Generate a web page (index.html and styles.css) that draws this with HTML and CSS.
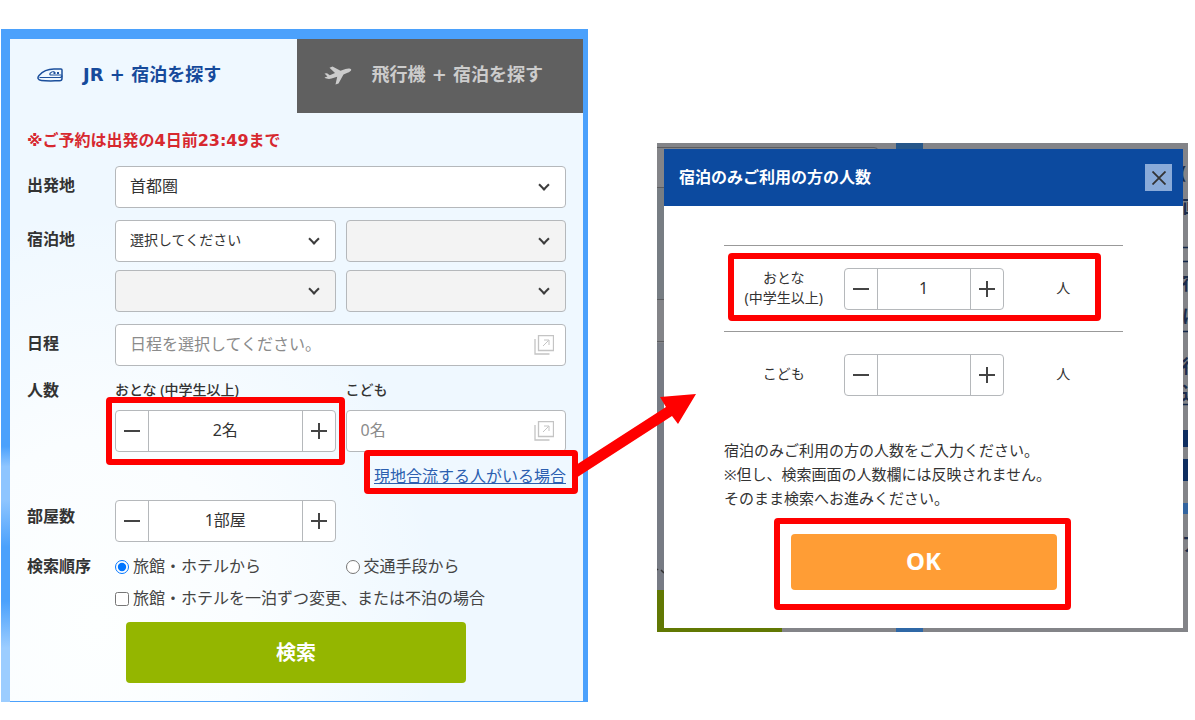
FILE: index.html
```html
<!DOCTYPE html>
<html lang="ja">

<head>
    <meta charset="UTF-8">
    <meta name="viewport" content="width=device-width, initial-scale=1.0">
    <title>JR + 宿泊を探す</title>
    <link rel="stylesheet" href="styles.css">
</head>

<body>
    <div id="container">
        <div class="search-box">
            <div class="search-inner">
                <div class="tab-box">
                    <button type="button" class="tab selected">
                        <svg width="26" height="14" viewBox="0 0 26 14" fill="none" stroke="#1b4f9c" stroke-width="1.500">
                            <path d="M24 1H17C10 1 5 4 2 7.500C0 10 1 12 4.500 12.500C10 13.200 17 12.800 22.500 12.800Q25 12.800 25 10.500V2Q25 1 24 1Z" />
                            <path d="M2.500 9.500H22.500Q25 9.500 25 7.500" stroke-width="1.200" />
                            <path d="M24.500 7H14.500Q12 7 13.200 5.200Q14.500 3.500 17.500 3.500" stroke-width="1.200" />
                            <path d="M16.500 5h2M20 5h2" stroke-width="2" />
                        </svg>
                        <span>JR + 宿泊を探す</span>
                    </button>
                    <button type="button" class="tab">
                        <svg width="28" height="20" viewBox="0 0 28 20" fill="#cccccc">
                            <path d="M0.500 8.500L3 8.300L5.800 10.200L11 8L5.500 2.800L8.500 1.500L16.500 5.700L21.500 4C24 3.200 26.500 3.300 27.200 4.500C27.600 5.800 25.500 7 23.500 7.800L19.500 9.400L14.500 18.500L11.500 19.500L13.200 11.700L7.500 13.600C5 14.300 2.500 14 0.500 12.500L3.500 11.500Z" />
                        </svg>
                        <span>飛行機 + 宿泊を探す</span>
                    </button>
                </div>

                <form class="search-form">
                    <p class="limit">※ご予約は出発の4日前23:49まで</p>

                    <div class="row">
                        <label class="head" for="departure">出発地</label>
                        <div class="fields">
                            <div class="select wide large">
                                <select id="departure">
                                    <option>首都圏</option>
                                </select>
                            </div>
                        </div>
                    </div>

                    <div class="row">
                        <label class="head" for="area">宿泊地</label>
                        <div class="fields">
                            <div class="select">
                                <select id="area">
                                    <option>選択してください</option>
                                </select>
                            </div>
                            <div class="select"><select aria-label="宿泊地2" disabled></select></div>
                            <div class="select"><select aria-label="宿泊地3" disabled></select></div>
                            <div class="select"><select aria-label="宿泊地4" disabled></select></div>
                        </div>
                    </div>

                    <div class="row">
                        <label class="head" for="schedule">日程</label>
                        <div class="fields">
                            <div class="popup-input wide">
                                <input type="text" id="schedule" placeholder="日程を選択してください。">
                                <svg width="20" height="20" viewBox="0 0 20 20" fill="none" stroke="#c4c4c4">
                                    <path d="M4.500 0.500h15v15h-15zM1 4v15h14.500" stroke-width="1.300" />
                                    <path d="M9 11L14.500 5.500M10 5h5v5" />
                                </svg>
                            </div>
                        </div>
                    </div>

                    <div class="row">
                        <span class="head top">人数</span>
                        <div class="fields">
                            <div>
                                <label class="sub" for="adult">おとな (中学生以上)</label>
                                <div class="stepper">
                                    <button type="button" class="minus" aria-label="減らす"></button>
                                    <input type="text" id="adult" value="2名">
                                    <button type="button" class="plus" aria-label="増やす"></button>
                                    <i class="mark mark-adult"></i>
                                </div>
                            </div>
                            <div>
                                <label class="sub" for="child">こども</label>
                                <div class="popup-input">
                                    <input type="text" id="child" placeholder="0名">
                                    <svg width="20" height="20" viewBox="0 0 20 20" fill="none" stroke="#c4c4c4">
                                        <path d="M4.500 0.500h15v15h-15zM1 4v15h14.500" stroke-width="1.300" />
                                        <path d="M9 11L14.500 5.500M10 5h5v5" />
                                    </svg>
                                </div>
                            </div>
                            <div class="wide join">
                                <a href="#stay-only">現地合流する人がいる場合<i class="mark mark-join"></i></a>
                            </div>
                        </div>
                    </div>

                    <div class="row">
                        <label class="head room" for="room">部屋数</label>
                        <div class="fields">
                            <div class="stepper">
                                <button type="button" class="minus" aria-label="減らす"></button>
                                <input type="text" id="room" value="1部屋">
                                <button type="button" class="plus" aria-label="増やす"></button>
                            </div>
                        </div>
                    </div>

                    <div class="row">
                        <span class="head top">検索順序</span>
                        <div class="fields">
                            <label class="choice"><input type="radio" name="order" checked>旅館・ホテルから</label>
                            <label class="choice"><input type="radio" name="order">交通手段から</label>
                            <label class="choice wide"><input type="checkbox">旅館・ホテルを一泊ずつ変更、または不泊の場合</label>
                        </div>
                    </div>

                    <button type="submit" class="search-btn">検索</button>
                </form>
            </div>
        </div>

        <div class="overlay">
            <!-- 背景に残る検索画面 -->
            <svg class="behind" viewBox="0 0 531 489" preserveAspectRatio="none">
                <rect width="531" height="489" fill="#838488" />
                <rect y="44" width="8" height="112" fill="#777d83" />
                <rect y="200" width="8" height="247" fill="#777b84" />
                <path d="M0 4.500H217Q221 4.500 221 8M0 44.500H8M0 156.500H8M0 198.500H8" fill="none" stroke="#5c5d60" />
                <rect x="239" width="27" height="8" fill="#265689" />
                <rect y="447" width="125" height="42" fill="#617803" />
                <rect x="239" y="484" width="27" height="5" fill="#2f68a6" />
                <path d="M0 426l1 1M4 427l3 3" stroke="#333" stroke-width="1.500" />
                <path d="M526 104.500h5M526 118.500h5M526 188.500h5M526 261.500h5" stroke="#15294a" stroke-width="1.500" />
                <rect x="525" y="287" width="6" height="17" fill="#0f2e60" />
                <rect x="525" y="316" width="6" height="22" fill="#0f2e60" />
                <rect x="525" y="360" width="6" height="11" fill="#33649f" />
                <g fill="#1b2c4a" font-size="18" font-weight="bold">
                    <text x="523" y="36">(</text>
                    <text x="525" y="70">直</text>
                    <text x="525" y="147">宿</text>
                    <text x="525" y="180">は</text>
                    <text x="525" y="230">待</text>
                    <text x="525" y="257">込</text>
                    <text x="525" y="408">ア</text>
                </g>
            </svg>

            <section id="stay-only" class="dialog" role="dialog" aria-labelledby="dialog-title">
                <header class="dialog-head">
                    <h2 id="dialog-title">宿泊のみご利用の方の人数</h2>
                    <button type="button" class="close" aria-label="閉じる">
                        <svg width="14" height="14" viewBox="0 0 14 14" stroke="#333" stroke-width="1.800">
                            <path d="M0.500 0.500L13.500 13.500M13.500 0.500L0.500 13.500" />
                        </svg>
                    </button>
                </header>
                <div class="dialog-body">
                    <div class="count">
                        <label for="stay-adult">おとな<br>(中学生以上)</label>
                        <div class="stepper">
                            <button type="button" class="minus" aria-label="減らす"></button>
                            <input type="text" id="stay-adult" value="1">
                            <button type="button" class="plus" aria-label="増やす"></button>
                        </div>
                        <span>人</span>
                        <i class="mark mark-count"></i>
                    </div>
                    <div class="count">
                        <label for="stay-child">こども</label>
                        <div class="stepper">
                            <button type="button" class="minus" aria-label="減らす"></button>
                            <input type="text" id="stay-child" value="">
                            <button type="button" class="plus" aria-label="増やす"></button>
                        </div>
                        <span>人</span>
                    </div>
                    <p class="guide">宿泊のみご利用の方の人数をご入力ください。<br>※但し、検索画面の人数欄には反映されません。<br>そのまま検索へお進みください。</p>
                    <div class="ok-box">
                        <button type="button" class="ok">OK</button>
                        <i class="mark mark-ok"></i>
                    </div>
                </div>
            </section>

            <svg class="arrow" width="122" height="86" viewBox="576 393 122 86" fill="#ff0000">
                <path d="M576 465L666 407L660 397L696 394L678 424L672 416L576 478Z" />
            </svg>
        </div>
    </div>
</body>

</html>
```
FILE: styles.css
```css
* {
    margin: 0;
    padding: 0;
    box-sizing: border-box;
}

body {
    background: #fff;
    color: #333;
    font-family: "Noto Sans", "Noto Sans CJK JP", sans-serif;
    font-size: 16px;
    line-height: 24px;
}

button,
input,
select {
    font: inherit;
    color: inherit;
}

button {
    border: none;
    background: none;
    cursor: pointer;
}

#container {
    display: grid;
    grid-template-columns: 587fr 531fr;
    column-gap: 69px;
    align-items: start;
    padding: 29px 7px 18px 1px;
}

/* 検索ボックス */

.search-box {
    padding: 10px 5px 1px 9px;
    background: linear-gradient(#4ba1fc 0, #4ba1fc 62%, #8ec5ff 65%, #8ec5ff 70%, #4ba1fc 77%, #4ba1fc 85%, #9ccdff 92%, #9ccdff 100%) left / 9px 100% no-repeat, #4ba1fc;
}

.search-inner {
    background: radial-gradient(ellipse at 15% 88%, #fdffff 0, #fafdff 22%, rgba(240, 248, 255, 0) 50%), #eff8ff;
}

.tab-box {
    display: grid;
    grid-template-columns: 1fr 1fr;
}

.tab {
    display: flex;
    align-items: center;
    gap: 20px;
    height: 74px;
    padding: 0 27px 2px;
    background: #606060;
    color: #ccc;
    font-family: "DejaVu Sans", "Noto Sans CJK JP", sans-serif;
    font-size: 18px;
    font-weight: bold;
    white-space: nowrap;
}

.tab.selected {
    background: none;
    color: #164a9b;
}

.search-form {
    padding: 16px 17px 18px;
}

.limit {
    margin-bottom: 13px;
    color: #d7282f;
    font-family: "DejaVu Sans", "Noto Sans CJK JP", sans-serif;
    font-weight: bold;
}

.row {
    display: grid;
    grid-template-columns: 88px 1fr;
    margin-bottom: 12px;
}

.head {
    padding-top: 7px;
    font-weight: bold;
}

.head.top {
    padding-top: 0;
}

.head.room {
    padding-top: 4px;
}

.fields {
    display: grid;
    grid-template-columns: 1fr 1fr;
    gap: 8px 10px;
}

.wide {
    grid-column: 1 / 3;
}

.select,
.popup-input,
.stepper {
    position: relative;
    height: 42px;
}

.select select,
.popup-input input {
    width: 100%;
    height: 100%;
    padding: 0 14px 2px;
    border: 1px solid #b5b8bb;
    border-radius: 4px;
    background: #fff;
    appearance: none;
}

.select select {
    font-size: 14px;
}

.select.large select {
    font-size: 16px;
}

.select select:disabled {
    background: #f3f3f3;
    opacity: 1;
}

.select::after {
    content: "";
    position: absolute;
    top: 15px;
    right: 18px;
    width: 6px;
    height: 6px;
    border: solid #3c3c3c;
    border-width: 0 2px 2px 0;
    transform: rotate(45deg);
    pointer-events: none;
}

.popup-input input::placeholder {
    color: #8b8b8b;
}

.popup-input svg {
    position: absolute;
    top: 11px;
    right: 12px;
}

.sub {
    display: block;
    margin-bottom: 8px;
    font-size: 14px;
    font-weight: 500;
}

.stepper {
    display: grid;
    grid-template-columns: 32px 1fr 32px;
    border: 1px solid #b5b8bb;
    border-radius: 4px;
    background: #fff;
}

.stepper input {
    width: 100%;
    padding-bottom: 2px;
    border: solid #b5b8bb;
    border-width: 0 1px;
    background: none;
    text-align: center;
}

.minus {
    background: linear-gradient(#444, #444) center / 16px 2px no-repeat;
}

.plus {
    background: linear-gradient(#444, #444) center / 16px 2px no-repeat, linear-gradient(#444, #444) center / 2px 16px no-repeat;
}

.join {
    padding-top: 4px;
    text-align: right;
}

.join a {
    display: inline-block;
    position: relative;
    color: #2b5fb0;
}

.choice {
    display: flex;
    align-items: center;
    color: #444;
}

.choice input {
    width: 14px;
    height: 14px;
    margin: 1px 4px 0 0;
}

.search-btn {
    display: block;
    width: calc(100% - 199px);
    height: 61px;
    margin-left: 99px;
    border-radius: 4px;
    background: #94b600;
    color: #fff;
    font-size: 20px;
    font-weight: bold;
}

/* 人数入力ダイアログ */

.overlay {
    position: relative;
    margin-top: 114px;
    padding: 6px 5px 4px 7px;
}

.behind {
    position: absolute;
    top: 0;
    left: 0;
    width: 100%;
    height: 100%;
}

.dialog {
    position: relative;
    background: #fff;
}

.dialog-head {
    display: flex;
    align-items: center;
    justify-content: space-between;
    height: 57px;
    padding: 0 11px 0 15px;
    background: #0c4a9f;
    color: #fff;
}

.dialog-head h2 {
    padding-bottom: 2px;
    font-size: 16px;
}

.close {
    display: flex;
    align-items: center;
    justify-content: center;
    width: 27px;
    height: 27px;
    background: #8aabd9;
}

.dialog-body {
    padding: 39px 60px 38px;
}

.count {
    display: grid;
    grid-template-columns: 1fr 160px 1fr;
    align-items: center;
    position: relative;
    height: 86px;
    border-top: 1px solid #999;
    font-size: 14px;
    line-height: 20px;
    text-align: center;
}

.count label,
.count span {
    padding-bottom: 2px;
}

.count .stepper input {
    font-size: 16px;
}

.guide {
    padding-top: 21px;
    font-size: 15px;
}

.ok-box {
    position: relative;
    width: 266px;
    margin: 24px auto 0;
}

.ok {
    display: block;
    width: 100%;
    height: 56px;
    padding-bottom: 3px;
    border-radius: 4px;
    background: #ff9d35;
    color: #fff;
    font-size: 24px;
    font-weight: bold;
}

/* 赤枠と矢印 */

.mark {
    position: absolute;
    border: 6px solid #ff0000;
    border-radius: 4px;
    pointer-events: none;
}

.mark-adult {
    inset: -14px -10px -14px -10px;
}

.mark-join {
    inset: -14px -12px -6px -10px;
    z-index: 1;
}

.mark-count {
    inset: 7px 22px 10px 4px;
}

.mark-ok {
    inset: -16px -14px -20px -17px;
}

.arrow {
    position: absolute;
    top: 250px;
    left: -81px;
}
```
